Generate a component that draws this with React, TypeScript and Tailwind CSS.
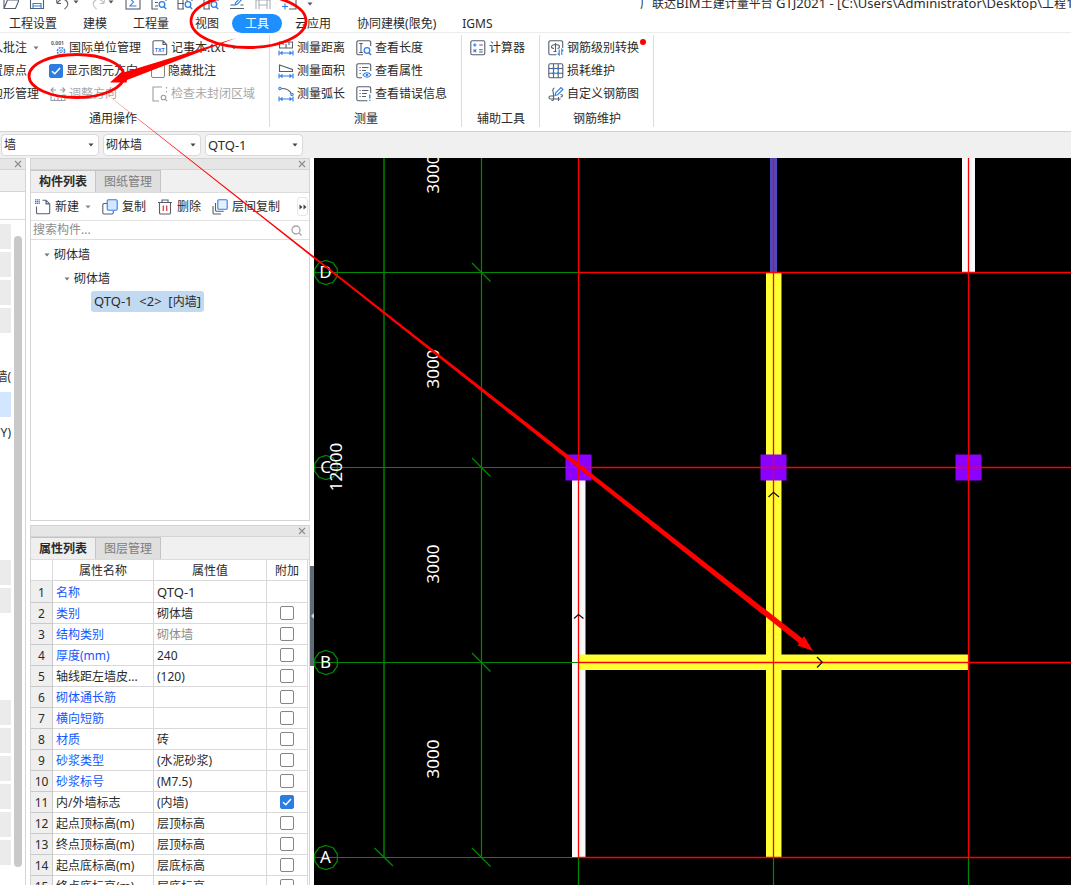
import React from "react";

type IconProps = { children: React.ReactNode; className?: string };

function Icon({ children, className = "" }: IconProps) {
  return (
    <svg
      viewBox="0 0 16 16"
      className={`h-4 w-4 shrink-0 ${className}`}
      fill="none"
      stroke="#565f6e"
      strokeWidth="1.1"
      aria-hidden="true"
    >
      {children}
    </svg>
  );
}

const BLUE = "#2f7fe8";

function Caret({ className = "" }: { className?: string }) {
  return (
    <svg viewBox="0 0 6 4" className={`h-1 w-1.5 shrink-0 ${className}`} aria-hidden="true">
      <path d="M0.5 0.5h5L3 3.6z" fill="currentColor" />
    </svg>
  );
}

const boxFrame = <rect x="0.8" y="0.8" width="14" height="14" rx="1.5" />;
const lens = (
  <g stroke={BLUE} strokeWidth="1.3">
    <circle cx="11" cy="10.5" r="2.8" />
    <path d="M13 12.7l2.2 2.3" />
  </g>
);
const dimension = (
  <path d="M1 10.5v5M15 10.5v5M1.5 13h13M4.5 11.500L2.500 13l2 1.500M11.500 11.500l2 1.500-2 1.500" stroke={BLUE} />
);

const icons = {
  folder: <Icon><path d="M1 14.5V2h5l1 2h7v2M1 14.5L4.5 6H16l-3.5 8.500z" /></Icon>,
  save: (
    <Icon>
      <path d="M1.5 1.5h10l3 3v10h-13z" />
      <path d="M4 14.500v-5h8v5M4 12h8" stroke={BLUE} />
    </Icon>
  ),
  undo: <Icon><path d="M2 9.500L1.500 5M2 9.500h4M2 9.500C5 5 8 4 11 6.500s2 6-1.500 8.500" /></Icon>,
  redo: <Icon className="opacity-40"><path d="M14 9.500l.5-4.500M14 9.500h-4M14 9.500C11 5 8 4 5 6.500s-2 6 1.500 8.500" /></Icon>,
  sum: (
    <Icon>
      <rect x="1" y="1" width="14" height="14" />
      <path d="M11 4.500H5L8.500 8 5 12h6.500" stroke={BLUE} />
    </Icon>
  ),
  listSearch: <Icon><path d="M7 15H1V1h14v6M1 5h14M4 8.500h3M4 12h3" />{lens}</Icon>,
  gridSearch: <Icon><path d="M7 15H1V1h14v6M1 5h14M1 9.500h6M6 1v14M10 1v6" />{lens}</Icon>,
  pen: (
    <Icon>
      <path d="M1 14.500h14M1.500 11h4M11.500 11h3" />
      <path d="M6 11l.8-2.500L13 2l1.500 1.500L8.500 10z" stroke={BLUE} />
    </Icon>
  ),
  grid: <Icon className="opacity-50"><path d="M1 15V1M15 15V1M4 15V1M12 15V1M1 6h14M4 11h8" /></Icon>,
  addFrame: <Icon><path d="M4 1h11v14H8" /><path d="M1 12.500h6M4 9.500v6" stroke={BLUE} /></Icon>,
  txt: (
    <Icon>
      <path d="M2.300 0.800H11l3.700 3.700v9a1.300 1.300 0 0 1-1.300 1.300H2.300A1.300 1.300 0 0 1 1 13.500V2.100A1.300 1.300 0 0 1 2.300 0.800zM11 0.800v3.700h3.700" />
      <text x="7.800" y="12.300" textAnchor="middle" fontSize="5.500" fontWeight="700" fill={BLUE} stroke="none">TXT</text>
    </Icon>
  ),
  direction: (
    <Icon className="opacity-60">
      <path d="M3.500 1.500L1 4l2.500 2.500M12.500 1.500L15 4l-2.500 2.500M1 4h5M10 4h5M4 9H1v5.500h14V9h-3M4.500 12.500v2M8 11.500v3M11.500 12.500v2" />
    </Icon>
  ),
  region: (
    <Icon className="opacity-60">
      <path d="M10 1H1v14h6" />
      <circle cx="11.500" cy="11.500" r="2.300" />
      <path d="M13.200 13.200L15 15M14.500 1v1.500M14.500 5v1.500" />
    </Icon>
  ),
  distance: <Icon><path d="M1.500 2h13v6h-13zM5 2v3M8 4v4M11 2v3" />{dimension}</Icon>,
  area: <Icon><path d="M1.500 2v6.500h13V6.500z" />{dimension}</Icon>,
  arc: (
    <Icon>
      <path d="M3.500 2.500c5 0 8.500 2 10 5.500" />
      <g stroke={BLUE}><circle cx="2" cy="2.500" r="1.200" /><circle cx="14" cy="8.500" r="1.200" /></g>
      {dimension}
    </Icon>
  ),
  length: (
    <Icon>
      <path d="M7 14.800H2.300a1.500 1.500 0 0 1-1.500-1.500v-11A1.500 1.500 0 0 1 2.300.8h10.900a1.500 1.500 0 0 1 1.500 1.500V6M3.200 3.500h3.600M5 3.500v9M3.200 12.500h3.600" />
      {lens}
    </Icon>
  ),
  property: (
    <Icon>
      <path d="M6 14.800H2.300a1.500 1.500 0 0 1-1.500-1.500v-11A1.500 1.500 0 0 1 2.300.8h10.900a1.500 1.500 0 0 1 1.500 1.500V8M3.500 4.500h1.200M6 4.500h6.500M3.500 7.500h1.200M6 7.500h4M3.500 10.500h1.200" />
      <path d="M7 12c2-3 6-3 8 0-2 3-6 3-8 0z" stroke={BLUE} />
      <circle cx="11" cy="12" r="0.8" stroke={BLUE} />
    </Icon>
  ),
  errors: (
    <Icon>
      <path d="M11.500 14.800H2.300a1.500 1.500 0 0 1-1.500-1.500v-11A1.500 1.500 0 0 1 2.300.8h10.900a1.500 1.500 0 0 1 1.500 1.500V7M3.500 4.500h1.200M6 4.500h6.500M3.500 7.500h1.200M6 7.500h5M3.500 10.500h1.200M6 10.500h4" />
      <path d="M13.800 8.500v4M13.800 13.700v1.300" stroke={BLUE} strokeWidth="1.300" />
    </Icon>
  ),
  calculator: (
    <Icon>
      {boxFrame}
      <path d="M3 5h3.600M4.800 3.200v3.600M3.500 9.500l2.700 2.700M6.200 9.500l-2.700 2.700" stroke={BLUE} />
      <path d="M9.200 5h3.500M9.200 9.800h3.500M9.200 12h3.500" />
    </Icon>
  ),
  rebarLevel: (
    <Icon>
      <path d="M8.500 14.800H2.300a1.500 1.500 0 0 1-1.500-1.500v-11A1.500 1.500 0 0 1 2.300.8h10.900a1.500 1.500 0 0 1 1.500 1.500V8" />
      <path d="M7.500 3v8.500M5.500 11.500h3M7.500 4.500C5 4.500 3.500 5.500 3.500 6.800s1.500 1.700 2.500 1.700M7.500 4.500c2.500 0 4 1 4 2.300s-1 1.700-2 1.700" />
      <path d="M11.200 9.500V15l-1.500-1.700M13.800 15V9.500l1.500 1.700" stroke={BLUE} />
    </Icon>
  ),
  loss: (
    <Icon>
      {boxFrame}
      <path d="M5.500 1v14M10.200 1v14M1 5.500h14M1 10.200h14" />
      <g fill={BLUE} stroke="none">
        <circle cx="5.500" cy="5.500" r="1.200" /><circle cx="10.200" cy="5.500" r="1.200" />
        <circle cx="5.500" cy="10.200" r="1.200" /><circle cx="10.200" cy="10.200" r="1.200" />
      </g>
    </Icon>
  ),
  custom: (
    <Icon>
      <path d="M6.500 2C3.500 2.500 5.500 6 5.500 9s1 6-2 5.500M5 10H2.500a1.500 1.500 0 0 0 0 3h10M12.500 8.500c3 0 2.500 2.500 0 2.500M10.500 11v4" />
      <path d="M7 9.500l.7-2.700L13 1.500l2 2L9.600 8.700z" stroke={BLUE} />
    </Icon>
  ),
  create: (
    <Icon>
      <path d="M7.500 1.200H11l3.700 3.700v8.600a1.300 1.300 0 0 1-1.300 1.300H2.800a1.300 1.300 0 0 1-1.300-1.300V7.500M11 1.200v3.700h3.700" />
      <path d="M0 .8h5M0 2.600h5M0 4.400h5" stroke={BLUE} strokeWidth="1.300" strokeDasharray="1.300 0.500" />
    </Icon>
  ),
  copy: (
    <Icon>
      <path d="M5 4.500H2A1.300 1.300 0 0 0 .8 5.800v8A1.300 1.300 0 0 0 2 15h8a1.300 1.300 0 0 0 1.300-1.200V12" />
      <rect x="5.200" y="0.800" width="10" height="10.500" rx="1.200" fill="#d6e6ff" stroke={BLUE} />
    </Icon>
  ),
  remove: (
    <Icon>
      <path d="M1 3.500h14M5 3.500V1h6v2.500M2.500 3.500v10A1.300 1.300 0 0 0 3.800 15h8.400a1.300 1.300 0 0 0 1.300-1.500v-10" />
      <path d="M6.300 6.500v5.500M9.700 6.500v5.500" stroke="#e03c3c" strokeWidth="1.300" />
    </Icon>
  ),
  layers: (
    <Icon>
      <path d="M3.500 4v7a1.300 1.300 0 0 0 1.300 1.300h7M1 7v6.700A1.300 1.300 0 0 0 2.300 15H9" />
      <rect x="5.800" y="0.800" width="9.400" height="9.400" rx="1" fill="#e6f0ff" stroke={BLUE} />
    </Icon>
  ),
};

function UnitIcon() {
  return (
    <svg viewBox="0 0 16 16" className="h-4 w-4 shrink-0 overflow-visible" fill="none" aria-hidden="true">
      <text x="1" y="5" fontSize="5" fontWeight="700" fill="#565f6e">0.001</text>
      <circle cx="11" cy="11.200" r="3.600" stroke={BLUE} strokeWidth="1.500" strokeDasharray="1.900 0.927" />
      <circle cx="11" cy="11.200" r="1.300" stroke={BLUE} strokeWidth="0.900" />
    </svg>
  );
}

function Check({ label, checked = false }: { label: string; checked?: boolean }) {
  return (
    <span className="relative block h-3.5 w-3.5 shrink-0">
      <input
        type="checkbox"
        aria-label={label}
        defaultChecked={checked}
        className="peer block h-3.5 w-3.5 appearance-none rounded-[2px] border border-[#858585] bg-white checked:border-[#2b7de1] checked:bg-[#2b7de1]"
      />
      <svg viewBox="0 0 14 14" className="pointer-events-none absolute inset-0 hidden peer-checked:block" aria-hidden="true">
        <path d="M3 7.200l2.800 2.600L11 4" fill="none" stroke="#fff" strokeWidth="1.500" />
      </svg>
    </span>
  );
}

function Tool({ icon, text, caret, disabled, dot }: { icon?: React.ReactNode; text: string; caret?: boolean; disabled?: boolean; dot?: boolean }) {
  return (
    <button
      type="button"
      disabled={disabled}
      className="relative flex h-[23px] items-center gap-[3px] whitespace-nowrap disabled:text-[#a8a8a8]"
    >
      {icon}
      <span>{text}</span>
      {caret && <Caret className="ml-[3px] text-[#777]" />}
      {dot && <span className="absolute top-[3px] -right-[7px] h-1.5 w-1.5 rounded-full bg-[#f00]" />}
    </button>
  );
}

function CheckTool({ text, checked }: { text: string; checked?: boolean }) {
  return (
    <label className="-ml-px flex h-[23px] items-center gap-[3px] whitespace-nowrap">
      <Check label={text} checked={checked} />
      {text}
    </label>
  );
}

function Group({ title, className, children }: { title: string; className: string; children: React.ReactNode }) {
  return (
    <section className={`relative flex flex-col pt-[3px] after:absolute after:top-0.5 after:right-0 after:bottom-1 after:w-px after:bg-[#dcdcdc] ${className}`}>
      <div className="flex flex-1">{children}</div>
      <h2 className="text-center leading-6">{title}</h2>
    </section>
  );
}

function Ribbon() {
  return (
    <div className="flex h-[99px] shrink-0 border-b border-[#d2d2d2] bg-white">
      <Group title="通用操作" className="w-[270px] pr-11">
        <div className="-ml-[9px] w-[59px] shrink-0">
          <Tool text="入批注" caret />
          <Tool text="置原点" />
          <Tool text="边形管理" />
        </div>
        <div className="w-[102px] shrink-0">
          <Tool icon={<UnitIcon />} text="国际单位管理" />
          <CheckTool text="显示图元方向" checked />
          <Tool icon={icons.direction} text="调整方向" disabled />
        </div>
        <div className="shrink-0">
          <Tool icon={icons.txt} text="记事本.txt" caret />
          <CheckTool text="隐藏批注" />
          <Tool icon={icons.region} text="检查未封闭区域" disabled />
        </div>
      </Group>
      <Group title="测量" className="w-48">
        <div className="ml-2 w-[78px] shrink-0">
          <Tool icon={icons.distance} text="测量距离" />
          <Tool icon={icons.area} text="测量面积" />
          <Tool icon={icons.arc} text="测量弧长" />
        </div>
        <div>
          <Tool icon={icons.length} text="查看长度" />
          <Tool icon={icons.property} text="查看属性" />
          <Tool icon={icons.errors} text="查看错误信息" />
        </div>
      </Group>
      <Group title="辅助工具" className="w-[78px]">
        <div className="ml-2">
          <Tool icon={icons.calculator} text="计算器" />
        </div>
      </Group>
      <Group title="钢筋维护" className="w-[114px]">
        <div className="ml-2">
          <Tool icon={icons.rebarLevel} text="钢筋级别转换" dot />
          <Tool icon={icons.loss} text="损耗维护" />
          <Tool icon={icons.custom} text="自定义钢筋图" />
        </div>
      </Group>
    </div>
  );
}

const quick: [string, React.ReactNode, boolean?][] = [
  ["打开", icons.folder],
  ["保存", icons.save],
  ["撤销", icons.undo, true],
  ["重做", icons.redo, true],
  ["汇总", icons.sum],
  ["查看报表", icons.listSearch],
  ["查看工程量", icons.gridSearch],
  ["查看计算式", icons.gridSearch],
  ["编辑", icons.pen],
  ["表格", icons.grid],
  ["添加", icons.addFrame],
];

function TitleBar() {
  return (
    <header className="flex h-2.5 shrink-0 items-end justify-between overflow-hidden bg-white">
      <div className="flex items-end pl-[3px]">
        {quick.map(([name, icon, caret]) => (
          <button key={name} type="button" aria-label={name} className={caret ? "flex w-[35px] items-center gap-0.5" : "flex w-[26px] items-center"}>
            {icon}
            {caret && <Caret className="text-[#555]" />}
          </button>
        ))}
        <Caret className="mb-1 text-[#555]" />
      </div>
      <h1 className="w-[431px] shrink-0 overflow-hidden text-[13px] leading-3 whitespace-nowrap">
        <span className="text-[12px]">广联达</span>BIM<span className="text-[12px]">土建计量平台</span>{" "}
        GTJ2021 - [C:\Users\Administrator\Desktop\<span className="text-[12px]">工程</span>1(2
      </h1>
    </header>
  );
}

const menu = ["工程设置", "建模", "工程量", "视图", "工具", "云应用", "协同建模(限免)", "IGMS"];

function Menu() {
  return (
    <nav className="flex h-[23px] shrink-0 items-center border-b border-[#ececec] bg-white pt-1">
      {menu.map((m, i) => (
        <button
          key={m}
          type="button"
          className={
            m === "工具"
              ? "h-[19px] rounded-full bg-[#1e8fff] px-[13px] leading-[19px] text-white"
              : i === 0
                ? "h-[19px] pr-[13px] pl-[9px] leading-[19px]"
                : "h-[19px] px-[13px] leading-[19px]"
          }
        >
          {m}
        </button>
      ))}
    </nav>
  );
}

function Selectors() {
  return (
    <div className="flex h-[26px] shrink-0 items-center gap-1 bg-[#f0f0f0] pl-px">
      {[["构件大类", "墙"], ["构件类型", "砌体墙"], ["构件", "QTQ-1"]].map(([name, value]) => (
        <div key={name} className="relative">
          <select
            aria-label={name}
            className={
              value === "QTQ-1"
                ? "h-[22px] w-[98px] appearance-none rounded border border-[#d9d9d9] bg-white pl-0.5 text-[13px]"
                : "h-[22px] w-[98px] appearance-none rounded border border-[#d9d9d9] bg-white pl-0.5"
            }
          >
            <option>{value}</option>
          </select>
          <Caret className="pointer-events-none absolute top-[9px] right-[5px] text-[#444]" />
        </div>
      ))}
    </div>
  );
}

function CloseStrip() {
  return (
    <div className="flex h-[11px] shrink-0 items-center justify-end border-b border-[#d4d4d4] bg-[#e6e6e6] pr-[3px]">
      <button type="button" aria-label="关闭">
        <svg viewBox="0 0 8 8" className="block h-2 w-2" aria-hidden="true">
          <path d="M1 1l6 6M7 1L1 7" stroke="#8c8c8c" strokeWidth="1.100" />
        </svg>
      </button>
    </div>
  );
}

function PanelTabs({ active, other }: { active: string; other: string }) {
  return (
    <div role="tablist" className="flex h-[23px] shrink-0 border-b border-[#dcdcdc] bg-[#f0f0f0]">
      <button role="tab" aria-selected="true" type="button" className="w-[65px] border-t border-r border-[#c2c4c8] bg-[#efefef] font-bold">{active}</button>
      <button role="tab" aria-selected="false" type="button" className="w-[65px] border-t border-r border-[#c2c4c8] bg-[#dfdfdf] text-[#7d7d7d]">{other}</button>
    </div>
  );
}

const moduleCells = [
  "b", "b", "b", "b", "", "墙(", "on", "Y)", "", "", "", "", "b", "b", "", "", "", "b", "b", "b", "b", "b", "b",
];

function ModuleStrip() {
  return (
    <aside className="flex w-[26px] shrink-0 flex-col border-t border-r border-[#d4d4d4] bg-white">
      <CloseStrip />
      <div className="h-[22px] shrink-0 border-b border-[#d4d4d4] bg-[#f0f0f0]" />
      <div className="h-7 shrink-0 border-b border-[#dcdcdc]" />
      <div className="flex min-h-0 flex-1 justify-between overflow-hidden pt-1 pr-[3px]">
        <ul className="w-[11px] overflow-hidden">
          {moduleCells.map((c, i) => (
            <li
              key={i}
              className={
                c === "b"
                  ? "mb-[3px] h-[25px] bg-[#ebebeb]"
                  : c === "on"
                    ? "mb-[3px] h-[25px] bg-[#d3e6ff]"
                    : "mb-[3px] flex h-[25px] items-center justify-end whitespace-nowrap"
              }
            >
              {c.length === 2 && c !== "on" ? c : ""}
            </li>
          ))}
        </ul>
        <div className="mt-3 mb-[18px] w-2 rounded-full bg-[#c9c9c9]" />
      </div>
    </aside>
  );
}

function ComponentPanel() {
  return (
    <section className="flex h-[363px] shrink-0 flex-col border border-[#d4d4d4] bg-white">
      <CloseStrip />
      <PanelTabs active="构件列表" other="图纸管理" />
      <div className="flex h-7 shrink-0 items-center gap-[11px] border-b border-[#e2e2e2] pr-px pl-1">
        <button type="button" className="flex items-center gap-1">
          {icons.create}新建<Caret className="ml-0.5 text-[#888]" />
        </button>
        <button type="button" className="flex items-center gap-1">{icons.copy}复制</button>
        <button type="button" className="flex items-center gap-1">{icons.remove}删除</button>
        <button type="button" className="flex items-center gap-1">{icons.layers}层间复制</button>
        <button type="button" aria-label="更多" className="ml-auto flex h-[19px] w-[11px] items-center justify-center rounded-[3px] border border-[#e6e6e6]">
          <svg viewBox="0 0 8 6" className="h-1.5 w-2 shrink-0" aria-hidden="true">
            <path d="M0.500 0.500L3.500 3l-3 2.500zM4.500 0.500L7.500 3l-3 2.500z" fill="#3c4454" />
          </svg>
        </button>
      </div>
      <div className="flex h-[19px] shrink-0 items-center border-b border-[#dcdcdc] pr-[7px]">
        <input aria-label="搜索构件" placeholder="搜索构件..." className="min-w-0 flex-1 pl-0.5 leading-4 outline-none placeholder:text-[#8c8c8c]" />
        <svg viewBox="0 0 11 11" className="h-[11px] w-[11px]" fill="none" stroke="#a6a6a6" strokeWidth="1.300" aria-hidden="true">
          <circle cx="5" cy="5" r="4" /><path d="M8 8l2.500 2.500" />
        </svg>
      </div>
      <ul role="tree" className="pt-[3px] leading-6">
        <li role="treeitem" className="flex items-center gap-1 pl-[13px]"><Caret className="text-[#777]" />砌体墙</li>
        <li role="treeitem" className="flex items-center gap-1 pl-[33px]"><Caret className="text-[#777]" />砌体墙</li>
        <li role="treeitem" aria-selected="true" className="ml-[60px] flex items-start">
          <span className="rounded-[3px] bg-[#c1d9f1] px-[3px] text-[13px] leading-[21px] whitespace-pre">
            QTQ-1  &lt;2&gt;  [<span className="text-[12px]">内墙</span>]
          </span>
        </li>
      </ul>
    </section>
  );
}

type Row = { name: string; value: string; link?: boolean; muted?: boolean; box?: boolean; checked?: boolean };
const rows: Row[] = [
  { name: "名称", value: "QTQ-1", link: true, box: false },
  { name: "类别", value: "砌体墙", link: true },
  { name: "结构类别", value: "砌体墙", link: true, muted: true },
  { name: "厚度(mm)", value: "240", link: true },
  { name: "轴线距左墙皮...", value: "(120)" },
  { name: "砌体通长筋", value: "", link: true },
  { name: "横向短筋", value: "", link: true },
  { name: "材质", value: "砖", link: true },
  { name: "砂浆类型", value: "(水泥砂浆)", link: true },
  { name: "砂浆标号", value: "(M7.5)", link: true },
  { name: "内/外墙标志", value: "(内墙)", checked: true },
  { name: "起点顶标高(m)", value: "层顶标高" },
  { name: "终点顶标高(m)", value: "层顶标高" },
  { name: "起点底标高(m)", value: "层底标高" },
  { name: "终点底标高(m)", value: "层底标高" },
];

function PropertyPanel() {
  return (
    <section className="flex min-h-0 flex-1 flex-col overflow-hidden border border-b-0 border-[#d4d4d4] bg-white">
      <CloseStrip />
      <PanelTabs active="属性列表" other="图层管理" />
      <table className="mr-px table-fixed border-separate border-spacing-0 leading-[18px]">
        <colgroup>
          <col className="w-[22px]" />
          <col className="w-[101px]" />
          <col />
          <col className="w-[41px]" />
        </colgroup>
        <thead>
          <tr className="h-[21px]">
            {["", "属性名称", "属性值", "附加"].map((h, i) => (
              <th key={i} scope="col" className="border-r border-b border-[#d9d9d9] p-0 pt-0.5 font-normal">{h}</th>
            ))}
          </tr>
        </thead>
        <tbody>
          {rows.map((r, i) => (
            <tr key={i} className="h-[21px]">
              <th scope="row" className="border-r border-b border-[#c9c9c9] bg-[#efefef] p-0 pt-0.5 font-normal">{i + 1}</th>
              <td className={r.link ? "border-r border-b border-[#d9d9d9] p-0 pt-0.5 pl-[3px] whitespace-nowrap text-[#1557ff]" : "border-r border-b border-[#d9d9d9] p-0 pt-0.5 pl-[3px] whitespace-nowrap"}>{r.name}</td>
              <td className={r.muted ? "border-r border-b border-[#d9d9d9] p-0 pt-0.5 pl-[3px] text-[#8c8c8c]" : "border-r border-b border-[#d9d9d9] p-0 pt-0.5 pl-[3px]"}>
                {r.value === "QTQ-1" ? <span className="text-[13px]">{r.value}</span> : r.value}
              </td>
              <td className="border-r border-b border-[#d9d9d9] p-0">
                {r.box !== false && <div className="flex justify-center"><Check label={r.name + "附加"} checked={r.checked} /></div>}
              </td>
            </tr>
          ))}
        </tbody>
      </table>
    </section>
  );
}

const axisY = [272, 467, 662, 857];
const axisX = [578, 773, 968];

function Plan() {
  return (
    <svg className="h-full w-full" role="img" aria-label="平面图">
      <g transform="translate(-314 -158)">
        <rect x="770" y="158" width="7" height="114" fill="#4a4ac4" />
        <rect x="962" y="158" width="13" height="114" fill="#fafafa" />
        <rect x="572" y="480" width="13.500" height="377" fill="#f8f8f8" />
        <rect x="766" y="272" width="15.500" height="585" fill="#ffff33" />
        <rect x="579" y="654.500" width="389" height="15.500" fill="#ffff33" />
        {axisX.map((x) => (
          <rect key={x} x={x - 12.5} y="454.500" width="26" height="26" fill="#8b00ff" />
        ))}
        <g stroke="#008a00" strokeWidth="1.200">
          <path d="M384 158V857" stroke="#006000" strokeWidth="2" />
          <path d="M481.500 158V857" />
          {axisY.map((y) => (
            <g key={y} fill="none">
              <path d={`M314 ${y + 0.5}H578M472 ${y - 9}l18.500 18.500`} />
              <path d={`M326 ${y - 11.5}l7 2.300 4.300 6 0 7.400-4.300 6-7 2.300-7-2.300-4.300-6 0-7.400 4.300-6z`} />
            </g>
          ))}
          <path d="M374.500 848l18.500 18" />
          {axisX.map((x) => <path key={x} d={`M${x + 0.5} 857V2000`} />)}
        </g>
        <g stroke="#ff0000" strokeWidth="1.300">
          {axisY.map((y) => <path key={y} d={`M578 ${y + 0.5}H3000`} />)}
          {axisX.map((x) => <path key={x} d={`M${x + 0.5} 158V857`} />)}
        </g>
        <path d="M574 618.500l4.500-4 5 4M768.500 497l5-4.700 5.500 4.700M817 657l5.300 5.200-5.300 5.300" fill="none" stroke="#111" strokeWidth="1.200" />
        <g fill="#fff" fontSize="17" textAnchor="middle">
          {["D", "C", "B", "A"].map((t, i) => (
            <text key={t} x="325.500" y={axisY[i] + 6}>{t}</text>
          ))}
          {[174, 369, 564, 759].map((y) => (
            <text key={y} transform={`translate(439 ${y}) rotate(-90)`}>3000</text>
          ))}
          <text transform="translate(342 467) rotate(-90)">12000</text>
        </g>
      </g>
    </svg>
  );
}

function Annotations() {
  return (
    <svg className="pointer-events-none absolute inset-0 h-full w-full" aria-hidden="true">
      <g fill="none" stroke="#f00" strokeWidth="2.800">
        <ellipse cx="248.500" cy="21" rx="57.500" ry="26.500" />
        <ellipse cx="76.500" cy="76" rx="47.500" ry="21.500" />
      </g>
      <g fill="#f00">
        <path d="M236 38L123.500 72.500 122 71.500 110 82.500l16.500 0 .5-2.500z" />
        <path d="M95 85L802.500 638.500 804 636l9 15-15.500-5.500 1.700-2.200z" />
      </g>
    </svg>
  );
}

export default function App() {
  return (
    <div className="relative flex h-screen flex-col overflow-hidden bg-white font-['Noto_Sans','Noto_Sans_CJK_SC',sans-serif] text-[12px] leading-4 text-[#2b2b2b]">
      <TitleBar />
      <Menu />
      <Ribbon />
      <Selectors />
      <main className="flex min-h-0 flex-1">
        <ModuleStrip />
        <div className="ml-1 flex w-[280px] shrink-0 flex-col gap-1">
          <ComponentPanel />
          <PropertyPanel />
        </div>
        <div className="flex w-1 shrink-0 flex-col">
          <button type="button" aria-label="折叠面板" className="mt-[408px] flex h-[100px] w-full items-center justify-end bg-[#5f6b77]">
            <svg viewBox="0 0 3 6" className="h-1.5 w-[3px]" aria-hidden="true"><path d="M3 0v6L0 3z" fill="#cfd4d9" /></svg>
          </button>
        </div>
        <div className="min-w-0 flex-1 overflow-hidden bg-black"><Plan /></div>
      </main>
      <Annotations />
    </div>
  );
}
